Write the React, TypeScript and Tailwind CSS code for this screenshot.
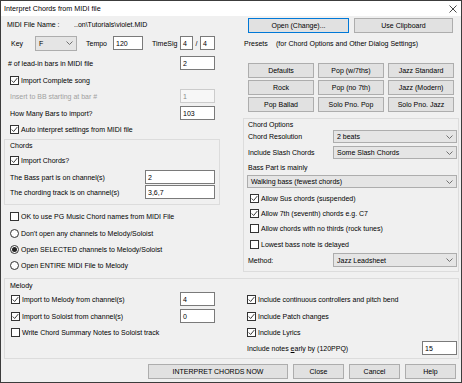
import React from "react";

function Check({ on }: { on?: boolean }) {
  return (
    <span className="w-[9px] h-[9px] shrink-0 border border-[#333333] bg-white flex items-center justify-center">
      {on && (
        <svg viewBox="0 0 8 8" className="w-[7px] h-[7px]">
          <polyline points="0.8,4 3,6.3 7.2,1.2" fill="none" stroke="#222222" strokeWidth="1" />
        </svg>
      )}
    </span>
  );
}

function Radio({ on }: { on?: boolean }) {
  return (
    <span className="w-[9px] h-[9px] shrink-0 rounded-full border border-[#333333] bg-white flex items-center justify-center">
      {on && <span className="w-[5px] h-[5px] rounded-full bg-[#222222]" />}
    </span>
  );
}

function Chevron() {
  return (
    <svg width="7" height="4" viewBox="0 0 7 4" className="shrink-0">
      <polyline points="0.5,0.5 3.5,3.5 6.5,0.5" fill="none" stroke="#707070" strokeWidth="1" />
    </svg>
  );
}

function Field({ value, w, disabled }: { value: string; w: string; disabled?: boolean }) {
  return (
    <div
      className={
        disabled
          ? `${w} h-[14px] border border-[#cccccc] bg-[#f7f7f7] text-[#8a8a8a] flex items-center pl-[2px]`
          : `${w} h-[14px] border border-[#7a7a7a] bg-white flex items-center pl-[2px]`
      }
    >
      {value}
    </div>
  );
}

function Select({ value, w, h = "h-[13px]" }: { value: string; w: string; h?: string }) {
  return (
    <div className={`${w} ${h} border border-[#adadad] bg-[#e5e5e5] flex items-center justify-between pl-[3px] pr-[3px]`}>
      <span>{value}</span>
      <Chevron />
    </div>
  );
}

function Btn({ label, w, primary }: { label: string; w: string; primary?: boolean }) {
  return (
    <div
      className={`${w} h-[15px] border ${primary ? "border-[#0078d7]" : "border-[#adadad]"} bg-[#e1e1e1] flex items-center justify-center`}
    >
      {label}
    </div>
  );
}

function CheckRow({ on, label, h, cls = "" }: { on?: boolean; label: React.ReactNode; h: string; cls?: string }) {
  return (
    <div className={`${h} flex items-center gap-[2px] ${cls}`}>
      <Check on={on} />
      <span>{label}</span>
    </div>
  );
}

function RadioRow({ on, label, h }: { on?: boolean; label: string; h: string }) {
  return (
    <div className={`${h} flex items-center gap-[2px] pl-[6px]`}>
      <Radio on={on} />
      <span>{label}</span>
    </div>
  );
}

export default function App() {
  return (
    <div className="w-[462px] h-[383px] border border-[#3c3c3c] bg-[#f0f0f0] text-black text-[7px] leading-none font-['Liberation_Sans',Arial,sans-serif] overflow-hidden flex flex-col">
      {/* title bar */}
      <div className="h-[15px] bg-white flex items-center justify-between pl-[3px] pr-[4px] shrink-0">
        <span className="text-[7.2px]">Interpret Chords from MIDI file</span>
        <svg width="8" height="8" viewBox="0 0 8 8">
          <line x1="0.5" y1="0.5" x2="7.5" y2="7.5" stroke="#333333" strokeWidth="0.9" />
          <line x1="7.5" y1="0.5" x2="0.5" y2="7.5" stroke="#333333" strokeWidth="0.9" />
        </svg>
      </div>

      <div className="flex items-start">
        {/* left column */}
        <div className="w-[216px] ml-[3px] flex flex-col">
          <div className="h-[17px] flex items-center pl-[3px]">
            <span className="w-[67px]">MIDI File Name :</span>
            <span>..on\Tutorials\violet.MID</span>
          </div>
          <div className="h-[20px] flex items-center pl-[7px]">
            <span className="w-[24px]">Key</span>
            <Select value="F" w="w-[42px]" h="h-[15px]" />
            <span className="w-[27px] ml-[9px]">Tempo</span>
            <Field value="120" w="w-[30px]" />
            <span className="w-[28px] ml-[9px]">TimeSig</span>
            <Field value="4" w="w-[13px]" />
            <span className="w-[7px] text-center">/</span>
            <Field value="4" w="w-[15px]" />
          </div>
          <div className="h-[20px] flex items-center justify-between pl-[4px] pr-[5px]">
            <span># of lead-in bars in MIDI file</span>
            <Field value="2" w="w-[35px]" />
          </div>
          <CheckRow on h="h-[15px]" cls="pl-[6px]" label="Import Complete song" />
          <div className="h-[16px] flex items-center justify-between pl-[6px] pr-[5px]">
            <span className="text-[#a0a0a0]">Insert to BB starting at bar #</span>
            <Field value="1" w="w-[35px]" disabled />
          </div>
          <div className="h-[18px] flex items-center justify-between pl-[6px] pr-[5px]">
            <span>How Many Bars to import?</span>
            <Field value="103" w="w-[35px]" />
          </div>
          <CheckRow on h="h-[15px]" cls="pl-[6px]" label="Auto interpret settings from MIDI file" />

          {/* Chords group */}
          <div className="mt-[2px] border border-[#dcdcdc] flex flex-col pl-[5px] pr-[4px] pb-[5px]">
            <div className="h-[11px] flex items-center">Chords</div>
            <CheckRow on h="h-[19px]" label="Import Chords?" />
            <div className="h-[14px] flex items-center justify-between">
              <span>The Bass part is on channel(s)</span>
              <Field value="2" w="w-[70px]" />
            </div>
            <div className="h-[14px] mt-[1px] flex items-center justify-between">
              <span>The chording track is on channel(s)</span>
              <Field value="3,6,7" w="w-[70px]" />
            </div>
          </div>

          <CheckRow h="h-[18px] mt-[2px]" cls="pl-[6px]" label="OK to use PG Music Chord names from MIDI File" />
          <RadioRow h="h-[16px]" label="Don't open any channels to Melody/Soloist" />
          <RadioRow on h="h-[16px]" label="Open SELECTED channels to Melody/Soloist" />
          <RadioRow h="h-[16px]" label="Open ENTIRE MIDI File to Melody" />
        </div>

        {/* right column */}
        <div className="w-[216px] ml-[23px] flex flex-col">
          <div className="mt-[2px] flex gap-[5px] pl-[5px]">
            <Btn label="Open (Change)..." w="w-[101px]" primary />
            <Btn label="Use Clipboard" w="w-[99px]" />
          </div>
          <div className="h-[20px] flex items-center pl-[1px]">
            <span className="w-[32px]">Presets</span>
            <span>(for Chord Options and Other Dialog Settings)</span>
          </div>
          <div className="mt-[10px] pl-[5px] grid grid-cols-[66px_66px_66px] gap-x-[4px] gap-y-[2px]">
            <Btn label="Defaults" w="w-full" />
            <Btn label="Pop (w/7ths)" w="w-full" />
            <Btn label="Jazz Standard" w="w-full" />
            <Btn label="Rock" w="w-full" />
            <Btn label="Pop (no 7th)" w="w-full" />
            <Btn label="Jazz (Modern)" w="w-full" />
            <Btn label="Pop Ballad" w="w-full" />
            <Btn label="Solo Pno. Pop" w="w-full" />
            <Btn label="Solo Pno. Jazz" w="w-full" />
          </div>

          {/* Chord Options group */}
          <div className="mt-[6px] border border-[#dcdcdc] flex flex-col pl-[4px] pr-[1px] pb-[4px]">
            <div className="h-[11px] flex items-center">Chord Options</div>
            <div className="h-[13px] flex items-center justify-between">
              <span>Chord Resolution</span>
              <Select value="2 beats" w="w-[124px]" />
            </div>
            <div className="h-[13px] mt-[3px] flex items-center justify-between">
              <span>Include Slash Chords</span>
              <Select value="Some Slash Chords" w="w-[124px]" />
            </div>
            <div className="h-[16px] flex items-center">Bass Part is mainly</div>
            <div className="ml-[-1px]">
              <Select value="Walking bass (fewest chords)" w="w-[210px]" />
            </div>
            <CheckRow on h="h-[16px] mt-[2px]" cls="pl-[2px]" label="Allow Sus chords (suspended)" />
            <CheckRow on h="h-[15px]" cls="pl-[2px]" label="Allow 7th (seventh) chords e.g. C7" />
            <CheckRow h="h-[15px]" cls="pl-[2px]" label="Allow chords with no thirds (rock tunes)" />
            <CheckRow h="h-[16px]" cls="pl-[2px]" label="Lowest bass note is delayed" />
            <div className="h-[14px] mt-[1px] flex items-center justify-between">
              <span>Method:</span>
              <Select value="Jazz Leadsheet" w="w-[124px]" h="h-[14px]" />
            </div>
          </div>
        </div>
      </div>

      {/* Melody group */}
      <div className="mt-[5px] ml-[3px] w-[455px] border border-[#dcdcdc] flex flex-col pb-[2px]">
        <div className="h-[12px] flex items-center pl-[5px]">Melody</div>
        <div className="flex">
          <div className="w-[211px] pl-[6px] pr-[1px] flex flex-col">
            <div className="h-[16px] flex items-center justify-between">
              <CheckRow on h="h-[16px]" label="Import to Melody from channel(s)" />
              <Field value="4" w="w-[35px]" />
            </div>
            <div className="h-[16px] mt-[1px] flex items-center justify-between">
              <CheckRow on h="h-[16px]" label="Import to Soloist from channel(s)" />
              <Field value="0" w="w-[35px]" />
            </div>
            <CheckRow h="h-[16px]" label="Write Chord Summary Notes to Soloist track" />
          </div>
          <div className="w-[211px] ml-[31px] pr-[1px] flex flex-col">
            <CheckRow on h="h-[16px]" label="Include continuous controllers and pitch bend" />
            <CheckRow on h="h-[16px] mt-[1px]" label="Include Patch changes" />
            <CheckRow on h="h-[16px]" label="Include Lyrics" />
            <div className="h-[16px] flex items-center justify-between">
              <span>
                Include notes <span className="underline">e</span>arly by (120PPQ)
              </span>
              <Field value="15" w="w-[35px]" />
            </div>
          </div>
        </div>
      </div>

      {/* bottom buttons */}
      <div className="mt-[5px] flex justify-end gap-[5px] pr-[5px]">
        <Btn label="INTERPRET CHORDS NOW" w="w-[140px]" />
        <Btn label="Close" w="w-[51px]" />
        <Btn label="Cancel" w="w-[51px]" />
        <Btn label="Help" w="w-[51px]" />
      </div>
    </div>
  );
}
